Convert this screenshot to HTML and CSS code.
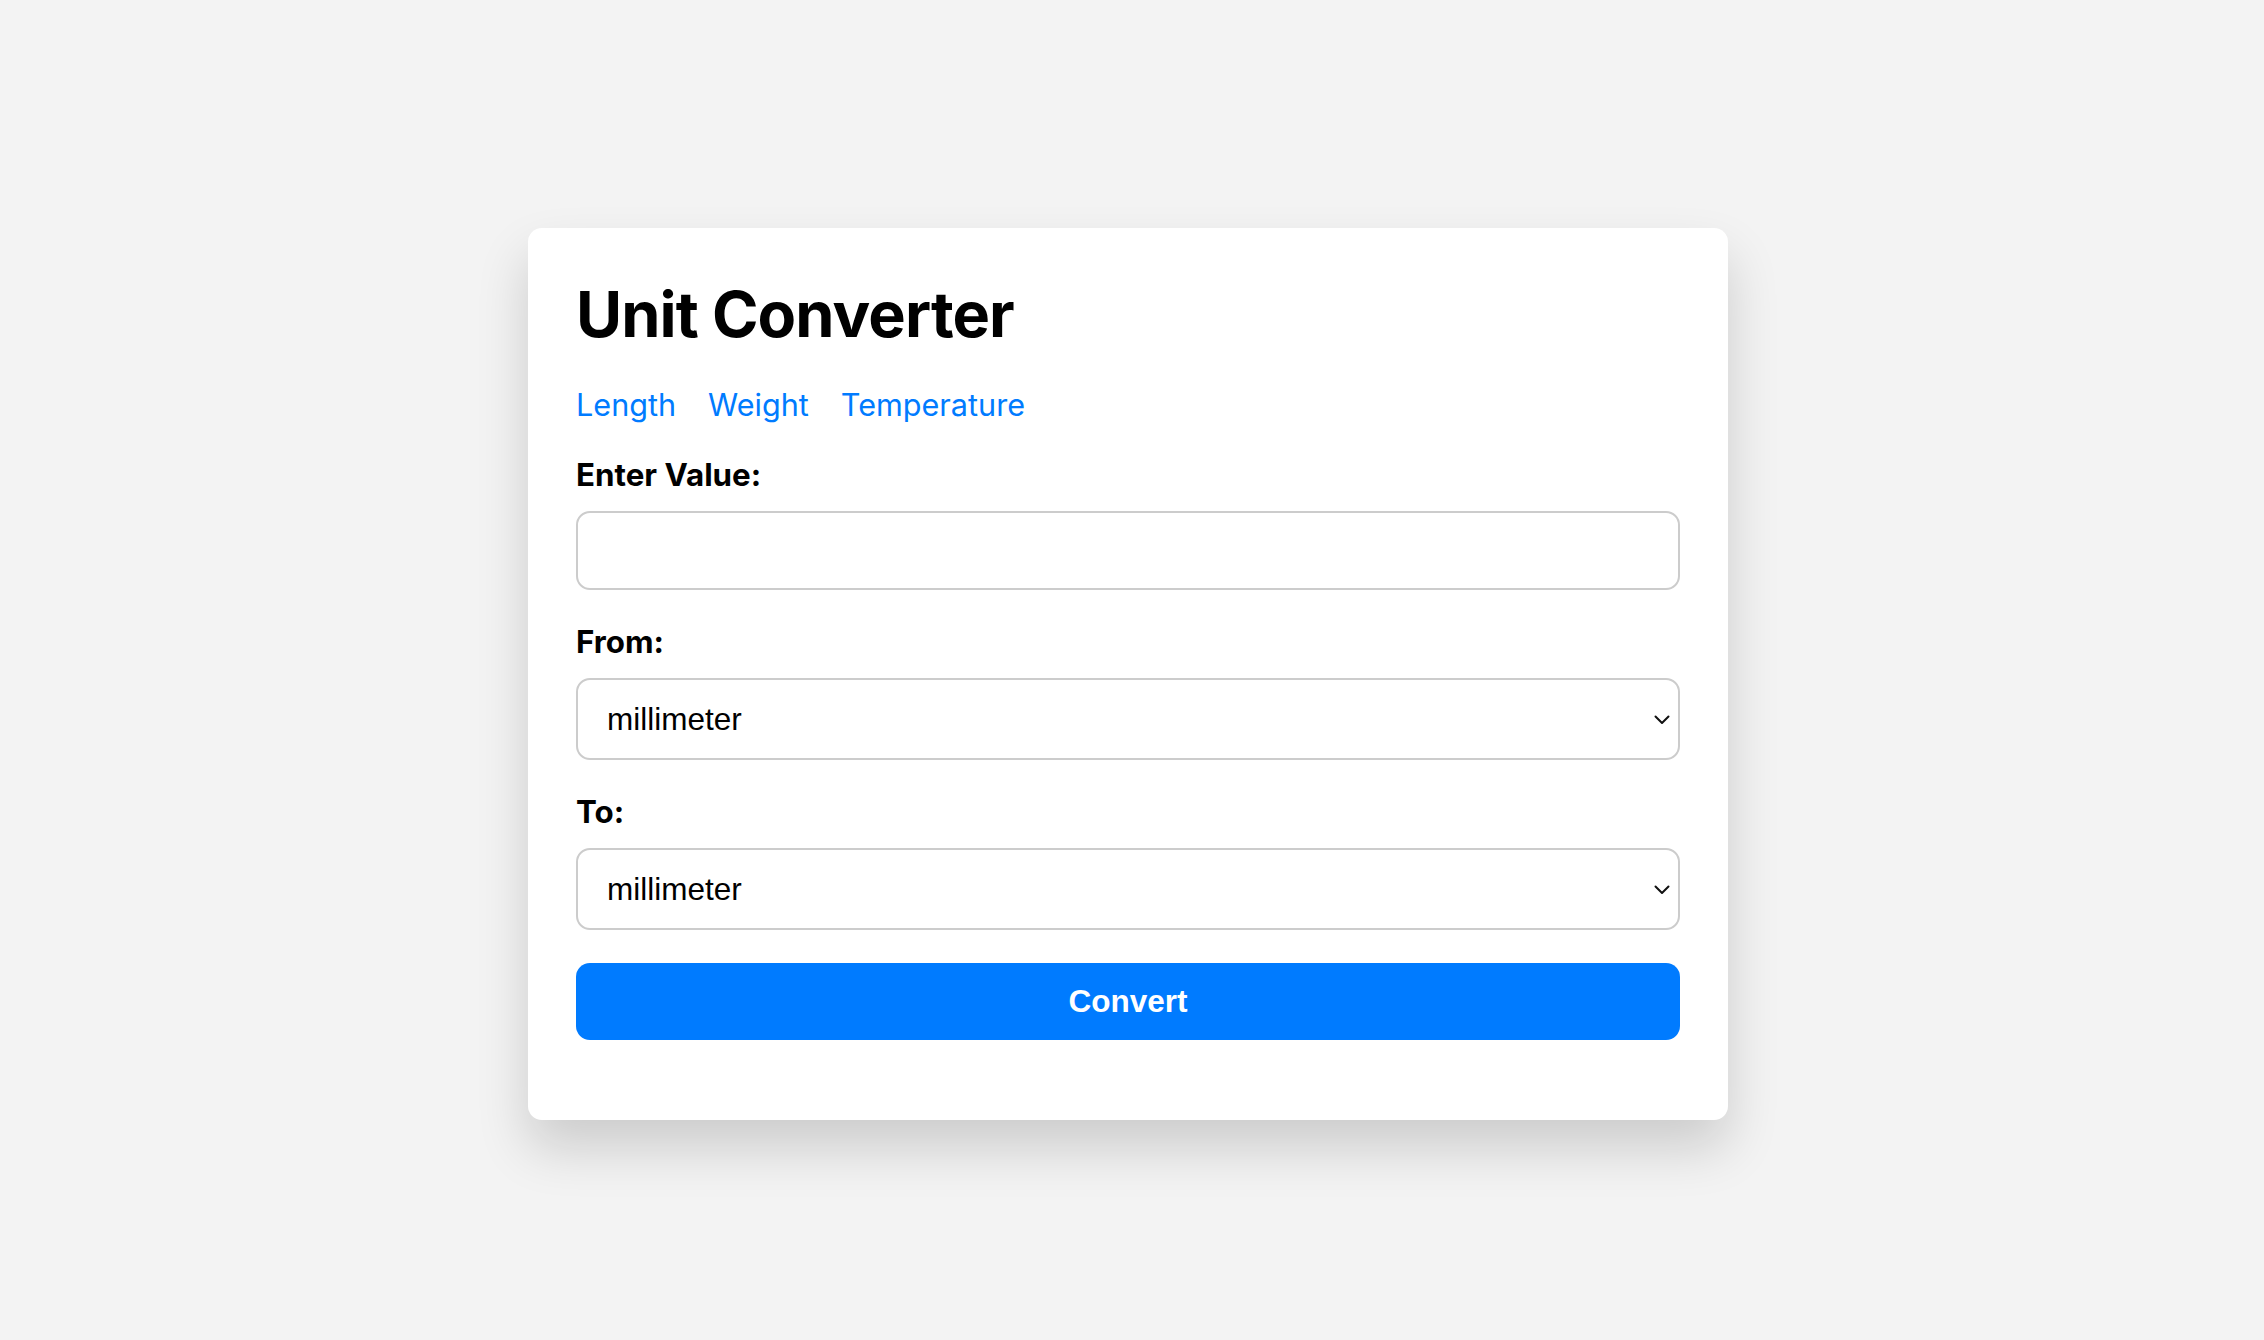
FILE: index.html
```html
<!DOCTYPE html>
<html lang="en">
<head>
<meta charset="utf-8">
<title>Unit Converter</title>
<link rel="stylesheet" href="styles.css">
</head>
<body>
  <main class="card">
    <h1 class="title">Unit Converter</h1>
    <nav class="tabs">
      <a class="tab" href="#">Length</a>
      <a class="tab" href="#">Weight</a>
      <a class="tab" href="#">Temperature</a>
    </nav>
    <form class="form">
      <label class="label" for="value">Enter Value:</label>
      <input class="field" id="value" type="text">

      <label class="label" for="from">From:</label>
      <div class="select-wrap">
        <select class="field select" id="from">
          <option>millimeter</option>
          <option>centimeter</option>
          <option>meter</option>
          <option>kilometer</option>
        </select>
        <svg class="chevron" width="16" height="10" viewBox="0 0 16 10" aria-hidden="true"><path d="M1.5 1.5 L8 8 L14.5 1.5" fill="none" stroke="#111" stroke-width="2" stroke-linecap="round" stroke-linejoin="round"/></svg>
      </div>

      <label class="label" for="to">To:</label>
      <div class="select-wrap">
        <select class="field select" id="to">
          <option>millimeter</option>
          <option>centimeter</option>
          <option>meter</option>
          <option>kilometer</option>
        </select>
        <svg class="chevron" width="16" height="10" viewBox="0 0 16 10" aria-hidden="true"><path d="M1.5 1.5 L8 8 L14.5 1.5" fill="none" stroke="#111" stroke-width="2" stroke-linecap="round" stroke-linejoin="round"/></svg>
      </div>

      <button class="btn" type="button">Convert</button>
    </form>
  </main>
</body>
</html>
```

FILE: styles.css
```css
html, body {
  margin: 0;
  padding: 0;
}
body {
  background: #f3f3f3;
  min-height: 1340px;
  display: flex;
  justify-content: center;
  align-items: flex-start;
  padding-right: 8px;
  box-sizing: border-box;
  font-family: Inter, "Noto Sans", sans-serif;
  color: #000;
}
.card {
  width: 1200px;
  box-sizing: border-box;
  margin-top: 228px;
  background: #fff;
  border-radius: 14px;
  padding: 48px 48px 80px;
  box-shadow: 0 28px 52px rgba(0, 0, 0, 0.16);
}
.title {
  margin: 0;
  font-size: 63px;
  line-height: 77px;
  font-weight: 700;
  letter-spacing: -0.9px;
}
.tabs {
  display: flex;
  gap: 32px;
  margin-top: 33px;
}
.tab {
  color: #007bff;
  text-decoration: none;
  font-size: 30.6px;
  line-height: 37px;
}
.form {
  display: flex;
  flex-direction: column;
  margin-top: 33px;
}
.label {
  font-size: 31.3px;
  line-height: 38px;
  font-weight: 700;
  margin-bottom: 17px;
}
.field {
  display: block;
  width: 100%;
  box-sizing: border-box;
  height: 79px;
  border: 2px solid #cccccc;
  border-radius: 14px;
  background: #fff;
  font-family: "Liberation Sans", Arial, sans-serif;
  font-size: 31.5px;
  color: #000;
  padding: 0 29px;
  margin-bottom: 33px;
  outline: none;
}
.select-wrap {
  position: relative;
}
.select {
  -webkit-appearance: none;
  appearance: none;
  height: 82px;
  margin-bottom: 33px;
}
.chevron {
  position: absolute;
  right: 10px;
  top: 37px;
  pointer-events: none;
}
.btn {
  height: 77px;
  border: none;
  border-radius: 14px;
  background: #007bff;
  color: #fff;
  font-family: "Liberation Sans", Arial, sans-serif;
  font-weight: 700;
  font-size: 31.5px;
  cursor: pointer;
}
```
